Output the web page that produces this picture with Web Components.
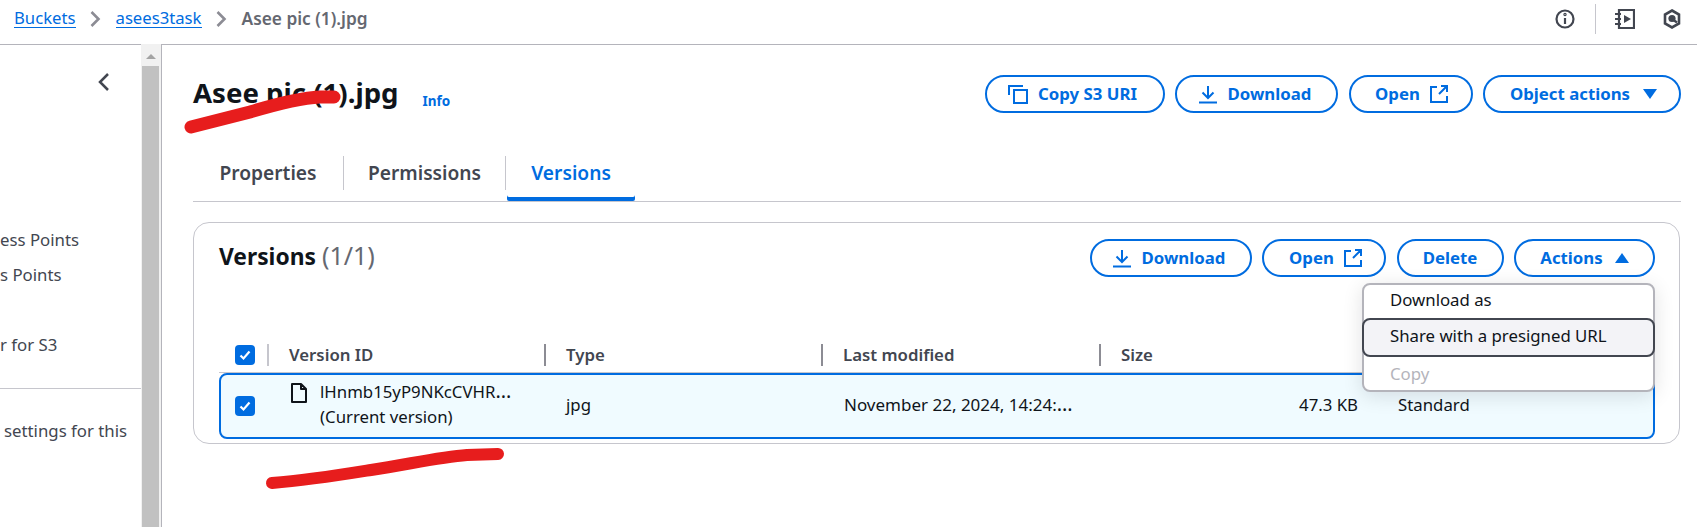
<!doctype html>
<html lang="en"><head><meta charset="utf-8"><title>Asee pic (1).jpg</title>
<style>
html,body{margin:0;padding:0;background:#fff;height:527px;overflow:hidden}
body{font:14px/20px "Noto Sans",sans-serif;color:#0f141a}
</style></head>
<body>
<s3-app>
  <s3-topbar slot="top"></s3-topbar>
  <s3-sidebar slot="side"></s3-sidebar>
  <s3-scroll slot="scroll"></s3-scroll>
  <s3-main slot="main"></s3-main>
</s3-app>
<script>
const I={
copy:'<svg width="20" height="20" viewBox="0 0 20 20" fill="none" stroke="currentColor" stroke-width="2"><path d="M1 11V2h14"/><rect x="6" y="6" width="13" height="13"/></svg>',
down:'<svg width="20" height="20" viewBox="0 0 20 20" fill="none" stroke="currentColor" stroke-width="2"><path d="M10 2v12M4.500 8.500l5.500 5.500 5.500-5.500M1 18.500h18"/></svg>',
ext:'<svg width="18" height="18" viewBox="0 0 18 18" fill="none" stroke="currentColor" stroke-width="2"><path d="M7 2H1v15h16v-6M11 1h6v6M17 1L9 9"/></svg>',
cd:'<svg width="14" height="10" viewBox="0 0 14 10" fill="currentColor"><path d="M0 0h14L7 10z"/></svg>',
cu:'<svg width="14" height="10" viewBox="0 0 14 10" fill="currentColor"><path d="M0 10h14L7 0z"/></svg>',
chev:'<svg width="11" height="18" viewBox="0 0 11 18" fill="none" stroke="currentColor" stroke-width="2.600"><path d="M1.500 2L8.500 9l-7 7"/></svg>',
file:'<svg width="16" height="20" viewBox="0 0 16 20" fill="none" stroke="#0f141a" stroke-width="2" stroke-linejoin="round"><path d="M1 1h9l5 5v13H1zM10 1v5h5"/></svg>'
};
function def(name,css,html){
  customElements.define(name,class extends HTMLElement{
    constructor(){super();const r=this.attachShadow({mode:'open'});
      r.innerHTML='<style>'+css+'</style>'+html;}
  });
}
def('s3-app',`:host{display:grid;grid-template-columns:141px 21px 1fr;grid-template-rows:44px 483px;width:1697px;height:527px;position:relative;overflow:hidden}
 .top{grid-column:1/4}
 svg{position:absolute;left:0;top:0;pointer-events:none}`,
 `<div class="top"><slot name="top"></slot></div><slot name="side"></slot><slot name="scroll"></slot><slot name="main"></slot>
 <svg width="1697" height="527" fill="none" stroke="#e71d1d" stroke-linecap="round" stroke-width="13"><path d="M191 127L250 112C280 103 300 98 320 97L334 97"/><path d="M272 483C310 480 340 475 371 470C410 464 440 457 467 455L498 454" stroke-width="12"/></svg>`);
def('s3-topbar',`:host{display:flex;align-items:center;height:45px;box-sizing:border-box;border-bottom:1px solid #b4b4bb;padding:0 16px 7px 14px;font-size:16.700px;line-height:20px}
 a{color:#006ce0;text-decoration:none;border-bottom:1px solid #006ce0;line-height:18px}
 .c{display:flex;color:#8c8c94;margin:0 14.500px}
 b{color:#656871;font-weight:600;font-size:17.300px}
 .r{margin-left:auto;display:flex;align-items:center;color:#424650}
 .d{width:1px;height:30px;background:#c6c6cd;margin:0 19px 0 20px}
 .n{margin-left:28px}`,
 `<a>Buckets</a><span class="c">${I.chev}</span><a>asees3task</a><span class="c">${I.chev}</span><b>Asee pic (1).jpg</b>
 <div class="r">
 <svg width="20" height="20" viewBox="0 0 20 20" fill="none" stroke="currentColor" stroke-width="2.200"><circle cx="10" cy="10" r="8.500"/><path d="M10 9v6"/><circle cx="10" cy="5.500" r=".6"/></svg>
 <div class="d"></div>
 <svg width="20" height="20" viewBox="0 0 20 20" fill="none" stroke="currentColor" stroke-width="2.200"><path d="M4 1h15v18H4zM0 5h6M0 10h6M0 15h6"/><path d="M9 6l7 4-7 4z" fill="currentColor" stroke="none"/></svg>
 <svg class="n" width="18" height="20" viewBox="0 0 18 20" fill="none" stroke="currentColor" stroke-width="2.600"><path d="M9 1.500l7 4v9l-7 4-7-4v-9z"/><circle cx="9" cy="9.500" r="3.600" fill="currentColor" stroke="none"/><path d="M9 10l5 3.500" stroke-width="2.400"/></svg>
 </div>`);
def('s3-sidebar',`:host{display:block;height:483px;overflow:hidden;position:relative;color:#424650;font-size:16.800px;line-height:20px}
 .chev{display:flex;justify-content:flex-end;padding:28px 30px 0 0;color:#424650;height:32px}
 .i{white-space:nowrap;height:35px}
 hr{border:0;border-top:1px solid #c6c6cd;margin:0}`,
 `<div class="chev"><svg width="14" height="20" viewBox="0 0 14 20" fill="none" stroke="currentColor" stroke-width="2.500"><path d="M11 2L3 10l8 8"/></svg></div>
 <div style="height:126px"></div>
 <div class="i">ess Points</div><div class="i">s Points</div><div class="i" style="padding-top:35px">r for S3</div>
 <hr style="margin-top:18px"><div class="i" style="padding:32px 0 0 4px">settings for this</div>`);
def('s3-scroll',`:host{display:flex;flex-direction:column;align-items:center;background:#f1f1f1;height:483px;border-right:1px solid #b4b4bb;box-sizing:border-box}
 i{display:block;margin-top:10px;width:0;height:0;border:5px solid transparent;border-top:0;border-bottom:5px solid #a3a3a3;margin-bottom:7px}
 div{width:17px;flex:1;background:#c1c1c1;margin-right:1px}`,`<i></i><div></div>`);
def('s3-btn',`:host{display:inline-flex;align-items:center;justify-content:center;gap:10px;box-sizing:border-box;height:38px;border:2px solid #006ce0;border-radius:19px;color:#006ce0;font-weight:700;font-size:16.800px;line-height:20px;white-space:nowrap;background:#fff}
 ::slotted(svg){flex:none}`,`<slot></slot>`);
def('s3-tabs',`:host{display:flex;height:46px;border-bottom:1px solid #c6c6cd;font-size:19.200px;font-weight:600;line-height:24px;color:#424650}
 .t{display:flex;align-items:center;justify-content:center;box-sizing:border-box;height:34px;margin-top:1px;border-right:1px solid #c6c6cd}
 .t.a{color:#006ce0;border:0;height:46px;margin:0 0 0 1px;width:128px;padding-bottom:11px;box-shadow:inset 0 -4px 0 #006ce0;border-radius:0 0 2px 2px}`,
 `<div class="t" style="width:151px">Properties</div><div class="t" style="width:162px">Permissions</div><div class="t a">Versions</div>`);
def('s3-check',`:host{display:inline-flex;width:20px;height:20px;border-radius:4px;background:#006ce0;align-items:center;justify-content:center;flex:none}`,
 `<svg width="14" height="14" viewBox="0 0 14 14" fill="none" stroke="#fff" stroke-width="2.200"><path d="M2.500 7.500l3 3 6-7"/></svg>`);
def('s3-menu',`:host{position:absolute;left:1168px;top:60px;width:293px;height:109px;box-sizing:border-box;border:2px solid #b4b4bb;border-radius:8px;background:#fff;box-shadow:0 4px 20px rgba(0,7,22,.12);display:flex;flex-direction:column;font-size:16.800px;line-height:20px;z-index:2}
 div{display:flex;align-items:center;padding-left:26px;height:33px;flex:none;box-sizing:border-box}
 .t{padding-bottom:4px}
 .f{margin:0 -2px;height:39px;background:#f3f3f7;border:2px solid #424650;border-radius:8px;padding-bottom:3px}
 .o{color:#b4b4bb}`,`<div class="t">Download as</div><div class="f">Share with a presigned URL</div><div class="o">Copy</div>`);
def('s3-table',`:host{display:block;font-size:16.800px;line-height:25px}
 .h{display:grid;grid-template-columns:50px 277px 277px 278px 1fr;height:28px;font-weight:600;color:#424650;align-items:start;border-bottom:1px solid #c6c6cd}
 .h>div{display:flex;align-items:center;height:22px;padding-left:20px;padding-bottom:2px;box-sizing:border-box}
 .h>.s{border-right:2px solid #c6c6cd;padding:0 0 0 16px}
 .h>.x{border-right:2px solid #8c8c94}
 .r{display:grid;grid-template-columns:70px 275px 278px 277px 237px 1fr;height:66px;box-sizing:border-box;border:2px solid #006ce0;border-radius:8px;background:#f0fbff;align-items:center}
 .ck{padding-left:14px;display:flex}
 .v{display:flex;gap:13px;align-items:flex-start;height:50px;white-space:nowrap}
 .v svg{margin-top:2px;flex:none}
 .v div{margin-top:-2.500px}
 .u{padding-bottom:4px}
 .e{font-size:20px;line-height:20px}
 .sz{text-align:right}`,
 `<div class="h"><div class="s"><s3-check></s3-check></div><div class="x">Version ID</div><div class="x">Type</div><div class="x">Last modified</div><div>Size</div></div>
 <div class="r"><div class="ck"><s3-check></s3-check></div>
 <div class="v">${I.file}<div>lHnmb15yP9NKcCVHR<span class="e">…</span><br>(Current version)</div></div>
 <div class="u">jpg</div><div class="u" style="font-size:17px">November 22, 2024, 14:24:<span class="e">…</span></div><div class="sz u">47.3 KB</div><div class="u" style="padding-left:40px">Standard</div></div>`);
def('s3-card',`:host{display:block;position:relative;box-sizing:border-box;height:222px;border:1px solid #c6c6cd;border-radius:16px;padding:16px 24px 0 25px;margin-right:17px}
 .hd{display:flex;justify-content:space-between;align-items:center;height:38px}
 h2{margin:0;font-size:22.800px;font-weight:700;line-height:30px;padding-bottom:4px}
 h2 span{font-weight:400;color:#656871;font-size:25px}
 .b{display:flex;gap:10.500px}
 s3-table{margin-top:67px}`,
 `<div class="hd"><h2>Versions <span>(1/1)</span></h2><div class="b">
 <s3-btn style="width:162px;padding-right:4px">${I.down}Download</s3-btn><s3-btn style="width:124px;padding-left:3px">Open${I.ext}</s3-btn><s3-btn style="width:107px">Delete</s3-btn><s3-btn style="width:141px;gap:12px">Actions${I.cu}</s3-btn></div></div>
 <s3-table></s3-table><s3-menu></s3-menu>`);
def('s3-main',`:host{display:block;padding:31px 0 0 31px;min-width:0}
 .hd{display:flex;align-items:center;justify-content:space-between;height:38px;padding-right:16px}
 h1{margin:0;font-size:27.600px;font-weight:700;line-height:36px;display:flex;align-items:center;gap:24px;color:#0f141a;padding-bottom:4px}
 h1 a{font-size:13.500px;color:#006ce0;font-weight:700;padding-top:17px;line-height:20px}
 .b{display:flex;gap:10.500px}
 s3-tabs{margin:42px 16px 20px 0}`,
 `<div class="hd"><h1>Asee pic (1).jpg <a>Info</a></h1><div class="b">
 <s3-btn style="width:180px;padding-right:4px">${I.copy}Copy S3 URI</s3-btn><s3-btn style="width:163px;padding-right:4px">${I.down}Download</s3-btn><s3-btn style="width:124px;padding-left:2px">Open${I.ext}</s3-btn><s3-btn style="width:198px;gap:13px;padding-left:3px">Object actions${I.cd}</s3-btn></div></div>
 <s3-tabs></s3-tabs><s3-card></s3-card>`);
</script>
</body></html>
